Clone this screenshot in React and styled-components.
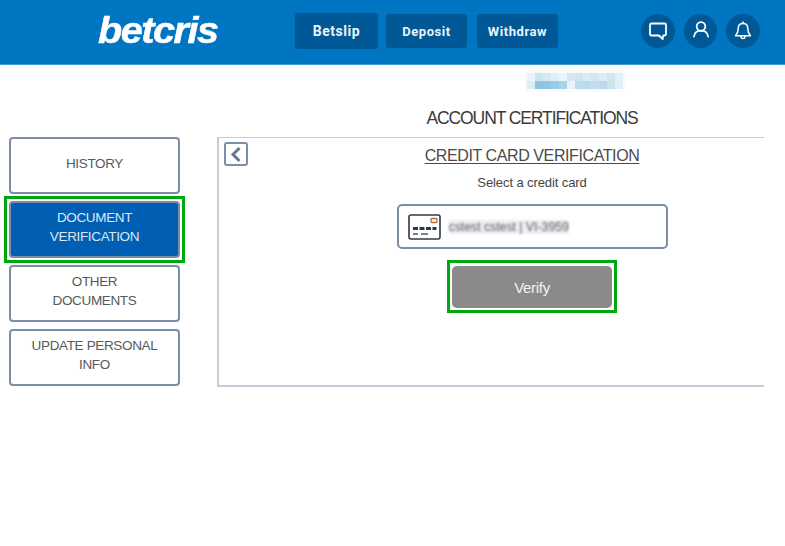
import React from "react";
import styled, { createGlobalStyle } from "styled-components";

const Global = createGlobalStyle`
  html, body { margin: 0; padding: 0; background: #fff; }
  body { font-family: "Liberation Sans", Arial, sans-serif; width: 785px; height: 546px; overflow: hidden; }
  * { box-sizing: border-box; }
`;

const Header = styled.header`
  height: 65px; background: #0075c2; border-bottom: 1px solid #3d9ad6;
  display: flex; align-items: center; padding: 0 25px 2px 98px;
`;
const Logo = styled.div`
  width: 119px; margin-right: 78px; color: #fff; font: italic 700 36px/36px "Liberation Sans", sans-serif;
  letter-spacing: -1.35px; white-space: nowrap; transform: scaleX(1.1); transform-origin: left center;
  -webkit-text-stroke: .5px #fff;
`;
const Nav = styled.nav`display: flex; align-items: center; margin-right: auto;`;
const NavButton = styled.div`
  width: ${p => p.$w}px; height: ${p => p.$h}px; margin-right: ${p => p.$mr}px;
  background: #005996; border-radius: 3px; color: #eaf3f9;
  display: flex; align-items: center; justify-content: center;
  font: 700 ${p => p.$size || 13}px/1 Roboto, sans-serif; letter-spacing: .55px;
`;
const IconGroup = styled.div`display: flex; gap: 9px;`;
const IconCircle = styled.div`
  width: ${p => p.$w || 34}px; height: 34px; border-radius: 50%; background: #005996;
  display: flex; align-items: center; justify-content: center;
`;
const Masked = styled.div`
  margin: 5px 0 0 525px; width: 100px; height: 22px; display: grid;
  grid-template-columns: repeat(12, 8px); grid-auto-rows: 8px; padding: 3px 2px 3px 2px;
  background: #f8fbfd;
`;
const MaskCell = styled.span`background: ${p => p.$c};`;
const Body = styled.div`
  margin-top: 17px; padding-left: 9px; display: flex; width: 764px;
`;
const Side = styled.aside`
  width: 171px; margin-top: 28px; flex: none; display: flex; flex-direction: column; gap: 7px;
`;
const SideItem = styled.div`
  position: relative; width: 171px; height: 57px; border: 2px solid #7c8ea6; border-radius: 4px;
  background: ${p => p.$active ? "#005fb2" : "#fff"}; color: ${p => p.$active ? "#dbe8f4" : "#555a60"};
  display: flex; align-items: center; justify-content: center; text-align: center;
  padding: 0 8px 5px; font-size: 13.5px; line-height: 19px; letter-spacing: -.35px;
`;
const GreenFrame = styled.span`
  position: absolute; inset: ${p => p.$inset || "-7px"}; border: 3px solid #00a80f; pointer-events: none;
`;
const Main = styled.main`
  margin-left: 37px; width: 547px; overflow: hidden; flex: none;
`;
const Title = styled.h1`
  width: 630px; margin: 0 0 10px; height: 18px; text-align: center; font-size: 17.5px; font-weight: 400; line-height: 18px;
  color: #3a3a3a; letter-spacing: -1.1px;
`;
const Panel = styled.section`
  width: 628px; height: 250px; border: 2px solid #c3ccd8; border-right: 0; border-top-width: 1px; position: relative;
  display: flex; flex-direction: column; align-items: center;
`;
const BackButton = styled.div`
  position: absolute; left: 5px; top: 4px; width: 24px; height: 24px; border: 2px solid #7c8ea6; border-radius: 3px;
  display: flex; align-items: center; justify-content: center;
`;
const CardTitle = styled.h2`
  margin: 9px 0 0; height: 18px; font-size: 16px; font-weight: 400; line-height: 18px; color: #4a4a4a;
  text-decoration: underline; text-underline-offset: 2px; letter-spacing: -.4px;
`;
const Hint = styled.p`margin: 10px 0 0; font-size: 13px; line-height: 15px; color: #444; letter-spacing: -.1px;`;
const CardSelect = styled.div`
  margin-top: 14px; width: 271px; height: 45px; border: 2px solid #7c8ea6; border-radius: 5px;
  display: flex; align-items: center; padding-left: 9px; gap: 8px;
`;
const MaskedCard = styled.span`
  font-size: 12.5px; color: #5f6368; background: #eceef1; filter: blur(1.2px); letter-spacing: -.1px; white-space: nowrap; width: 120px;
`;
const VerifyWrap = styled.div`position: relative; margin-top: 17px;`;
const Verify = styled.div`
  width: 160px; height: 42px; border-radius: 5px; background: #8a8a8a; color: #f4f4f4;
  display: flex; align-items: center; justify-content: center; font-size: 15px; letter-spacing: -.3px;
`;

const s = { fill: "none", stroke: "#fff", strokeWidth: 1.8, strokeLinecap: "round", strokeLinejoin: "round" };
const maskA = ["#eaf4fa","#cfe4f1","#d5e8f3","#e2eff7","#eaf4fa","#d5e7f2","#cfe3f0","#dceaf4","#d5e6f1","#dfecf5","#d3e5f1","#e4f0f7"];
const maskB = ["#dbecf6","#8cc5e4","#8ec6e4","#98cbe6","#a9d3ea","#eaf4fa","#bcdcee","#b8daed","#c2dfef","#bcdaeb","#cbe2ef","#e3f0f8"];

export default function App() {
  return (
    <>
      <Global />
      <Header>
        <Logo>betcris</Logo>
        <Nav>
          <NavButton $w={83} $h={36} $mr={8} $size={14}>Betslip</NavButton>
          <NavButton $w={81} $h={34} $mr={10}>Deposit</NavButton>
          <NavButton $w={81} $h={34} $mr={0}>Withdraw</NavButton>
        </Nav>
        <IconGroup>
          <IconCircle>
            <svg width="20" height="20" viewBox="0 0 20 20"><path {...s} d="M3.5 2.5h13a1.5 1.5 0 0 1 1.5 1.5v9a1.5 1.5 0 0 1-1.5 1.5h-1.2l-.6 3.5-3.7-3.5H3.5A1.5 1.5 0 0 1 2 13V4a1.5 1.5 0 0 1 1.5-1.5z" /></svg>
          </IconCircle>
          <IconCircle $w={33}>
            <svg width="20" height="20" viewBox="0 0 20 20"><circle {...s} cx="10" cy="5.500" r="4.300" /><path {...s} d="M3 15.500c.4-3.500 3-5.800 7-5.800s6.600 2.300 7 5.800" /></svg>
          </IconCircle>
          <IconCircle>
            <svg width="20" height="20" viewBox="0 0 20 20"><path {...s} strokeWidth="1.5" d="M10 2.500c-3 0-4.800 2.200-4.800 5.200 0 4-1.200 5.300-2.700 7h15c-1.500-1.700-2.700-3-2.700-7 0-3-1.800-5.200-4.800-5.200z" /><path {...s} strokeWidth="1.5" d="M8 15.200c0 1.300.9 2.300 2 2.300s2-1 2-2.300M10 1v1.500" /></svg>
          </IconCircle>
        </IconGroup>
      </Header>
      <Masked>
        {[...maskA, ...maskB].map((c, i) => <MaskCell key={i} $c={c} />)}
      </Masked>
      <Body>
        <Side>
          <SideItem>HISTORY</SideItem>
          <SideItem $active>DOCUMENT<br />VERIFICATION<GreenFrame /></SideItem>
          <SideItem>OTHER<br />DOCUMENTS</SideItem>
          <SideItem>UPDATE PERSONAL<br />INFO</SideItem>
        </Side>
        <Main>
          <Title>ACCOUNT CERTIFICATIONS</Title>
          <Panel>
            <BackButton>
              <svg width="17" height="17" viewBox="0 0 17 17"><path d="M11.500 2 5 8.500 11.500 15" fill="none" stroke="#66788f" strokeWidth="3" /></svg>
            </BackButton>
            <CardTitle>CREDIT CARD VERIFICATION</CardTitle>
            <Hint>Select a credit card</Hint>
            <CardSelect>
              <svg width="33" height="26" viewBox="0 0 33 26">
                <rect x="1" y="1" width="31" height="24" rx="2" fill="#fff" stroke="#2f3a46" strokeWidth="1.600" />
                <rect x="23" y="4.500" width="6" height="4" rx="1" fill="none" stroke="#b46a3a" strokeWidth="1.300" />
                <path d="M5 14.500h5M11.500 14.500h5M18 14.500h5M24.500 14.500h4" stroke="#2f3a46" strokeWidth="2.800" />
                <path d="M5 20h5M13 20h7" stroke="#555" strokeWidth="1.300" />
              </svg>
              <MaskedCard>cstest cstest | VI-3959</MaskedCard>
            </CardSelect>
            <VerifyWrap>
              <Verify>Verify</Verify>
              <GreenFrame $inset="-6px -5px -5px -5px" />
            </VerifyWrap>
          </Panel>
        </Main>
      </Body>
    </>
  );
}
